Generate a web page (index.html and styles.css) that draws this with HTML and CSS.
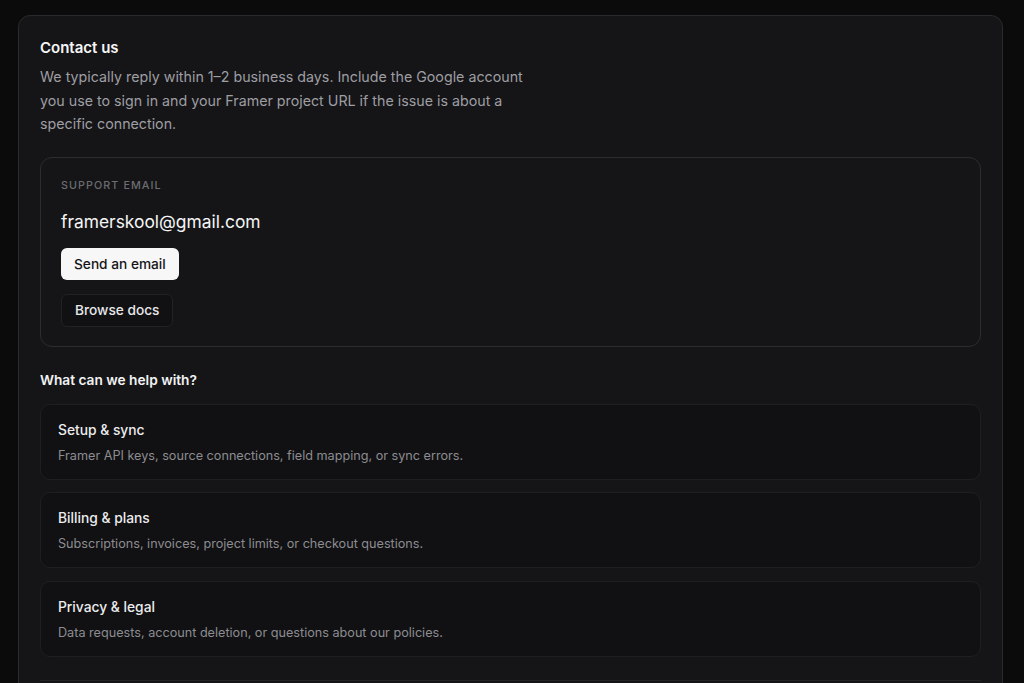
FILE: index.html
```html
<!DOCTYPE html>
<html lang="en">
<head>
<meta charset="utf-8">
<title>Contact us</title>
<link rel="stylesheet" href="styles.css">
</head>
<body>
<main class="page">
  <section class="card">
    <h1 class="title">Contact us</h1>
    <p class="lead">We typically reply within 1–2 business days. Include the Google account you use to sign in and your Framer project URL if the issue is about a specific connection.</p>

    <div class="support">
      <div class="label">SUPPORT EMAIL</div>
      <div class="email">framerskool@gmail.com</div>
      <div class="actions">
        <a class="btn btn-primary" href="#">Send an email</a>
        <a class="btn btn-ghost" href="#">Browse docs</a>
      </div>
    </div>

    <h2 class="subtitle">What can we help with?</h2>
    <ul class="topics">
      <li class="topic">
        <div class="topic-title">Setup &amp; sync</div>
        <div class="topic-desc">Framer API keys, source connections, field mapping, or sync errors.</div>
      </li>
      <li class="topic">
        <div class="topic-title">Billing &amp; plans</div>
        <div class="topic-desc">Subscriptions, invoices, project limits, or checkout questions.</div>
      </li>
      <li class="topic">
        <div class="topic-title">Privacy &amp; legal</div>
        <div class="topic-desc">Data requests, account deletion, or questions about our policies.</div>
      </li>
    </ul>
    <div class="divider"></div>
  </section>
</main>
</body>
</html>
```

FILE: styles.css
```css
* { box-sizing: border-box; }
html, body {
  margin: 0;
  padding: 0;
  background: #0b0b0c;
  font-family: "Inter", "Noto Sans", sans-serif;
  color: #f2f2f3;
  -webkit-font-smoothing: antialiased;
}
.page {
  padding: 15px 21px 0 18px;
}
.card {
  background: #151517;
  border: 1px solid #2a2a2e;
  border-radius: 12px;
  padding: 22px 21px 40px;
}
.title {
  margin: 0;
  font-size: 15px;
  line-height: 20px;
  font-weight: 600;
  color: #f5f5f6;
}
.lead {
  margin: 7px 0 0;
  max-width: 500px;
  font-size: 14.25px;
  line-height: 23.5px;
  color: #9e9ea3;
}
.support {
  margin-top: 21px;
  border: 1px solid #2d2d31;
  border-radius: 12px;
  padding: 21px 20px 19px;
  display: flex;
  flex-direction: column;
  align-items: flex-start;
}
.label {
  font-size: 10.75px;
  line-height: 14px;
  letter-spacing: 0.1em;
  font-weight: 500;
  color: #6c6c71;
}
.email {
  margin-top: 17px;
  font-size: 17.4px;
  line-height: 24px;
  color: #f5f5f6;
}
.actions {
  margin-top: 14px;
  display: flex;
  flex-direction: column;
  align-items: flex-start;
  gap: 14px;
}
.btn {
  display: inline-flex;
  align-items: center;
  justify-content: center;
  height: 32px;
  padding: 0 13px;
  border-radius: 6px;
  font-size: 13.7px;
  font-weight: 500;
  text-decoration: none;
}
.btn-primary {
  background: #f7f7f8;
  color: #151517;
}
.btn-ghost {
  height: 33px;
  background: #111113;
  border: 1px solid #222226;
  color: #e8e8ea;
}
.subtitle {
  margin: 23px 0 0;
  font-size: 13.7px;
  line-height: 20px;
  font-weight: 600;
  color: #f2f2f3;
}
.topics {
  list-style: none;
  margin: 14px 0 0;
  padding: 0;
  display: flex;
  flex-direction: column;
  gap: 12.5px;
}
.topic {
  background: #111113;
  border: 1px solid #1f1f22;
  border-radius: 10px;
  padding: 15px 17px 15px;
  height: 76px;
}
.topic-title {
  font-size: 13.8px;
  line-height: 20px;
  font-weight: 500;
  color: #ececee;
}
.topic-desc {
  margin-top: 7px;
  font-size: 12.65px;
  line-height: 18px;
  color: #8c8c91;
}
.divider {
  margin-top: 23px;
  border-top: 1px solid #222226;
}
```
